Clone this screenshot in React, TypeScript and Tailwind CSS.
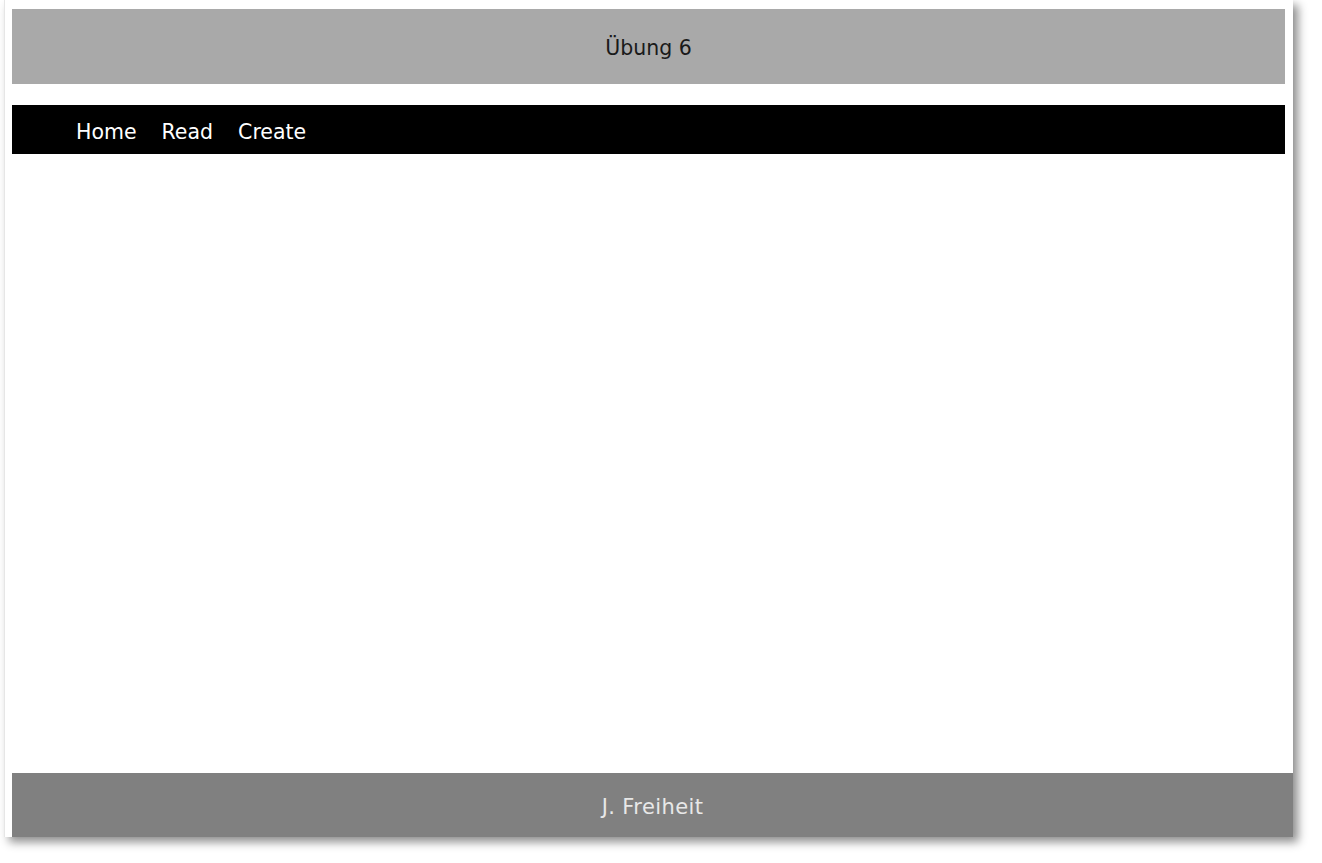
export default function App() {
  const links = ["Home", "Read", "Create"];

  return (
    <div className="w-full h-[863px] bg-white overflow-hidden" style={{ fontFamily: '"DejaVu Sans", Verdana, sans-serif' }}>
      {/* page with drop shadow */}
      <div className="ml-[4px] w-[1289px] h-[837px] bg-white border-l border-[#e6e6e6] shadow-[5px_5px_9px_rgba(0,0,0,0.45)] flex flex-col">
        <header className="mt-[9px] ml-[7px] mr-[8px] h-[75px] bg-[#a9a9a9] flex items-center justify-center">
          <h1 className="text-[20.5px] text-[#1a1a1a] pt-[3px]">Übung 6</h1>
        </header>

        <nav className="mt-[21px] ml-[7px] mr-[8px] h-[49px] bg-black flex items-center pl-[64px] gap-[25px]">
          {links.map((l) => (
            <a key={l} href="#" className="text-[20.5px] text-white leading-none pt-[5px]">
              {l}
            </a>
          ))}
        </nav>

        <main className="flex-1" />

        <footer className="ml-[7px] h-[64px] bg-[#808080] flex items-center justify-center">
          <span className="text-[21px] tracking-[0.4px] text-[#e8e8e8] pt-[6px]">J. Freiheit</span>
        </footer>
      </div>
    </div>
  );
}
